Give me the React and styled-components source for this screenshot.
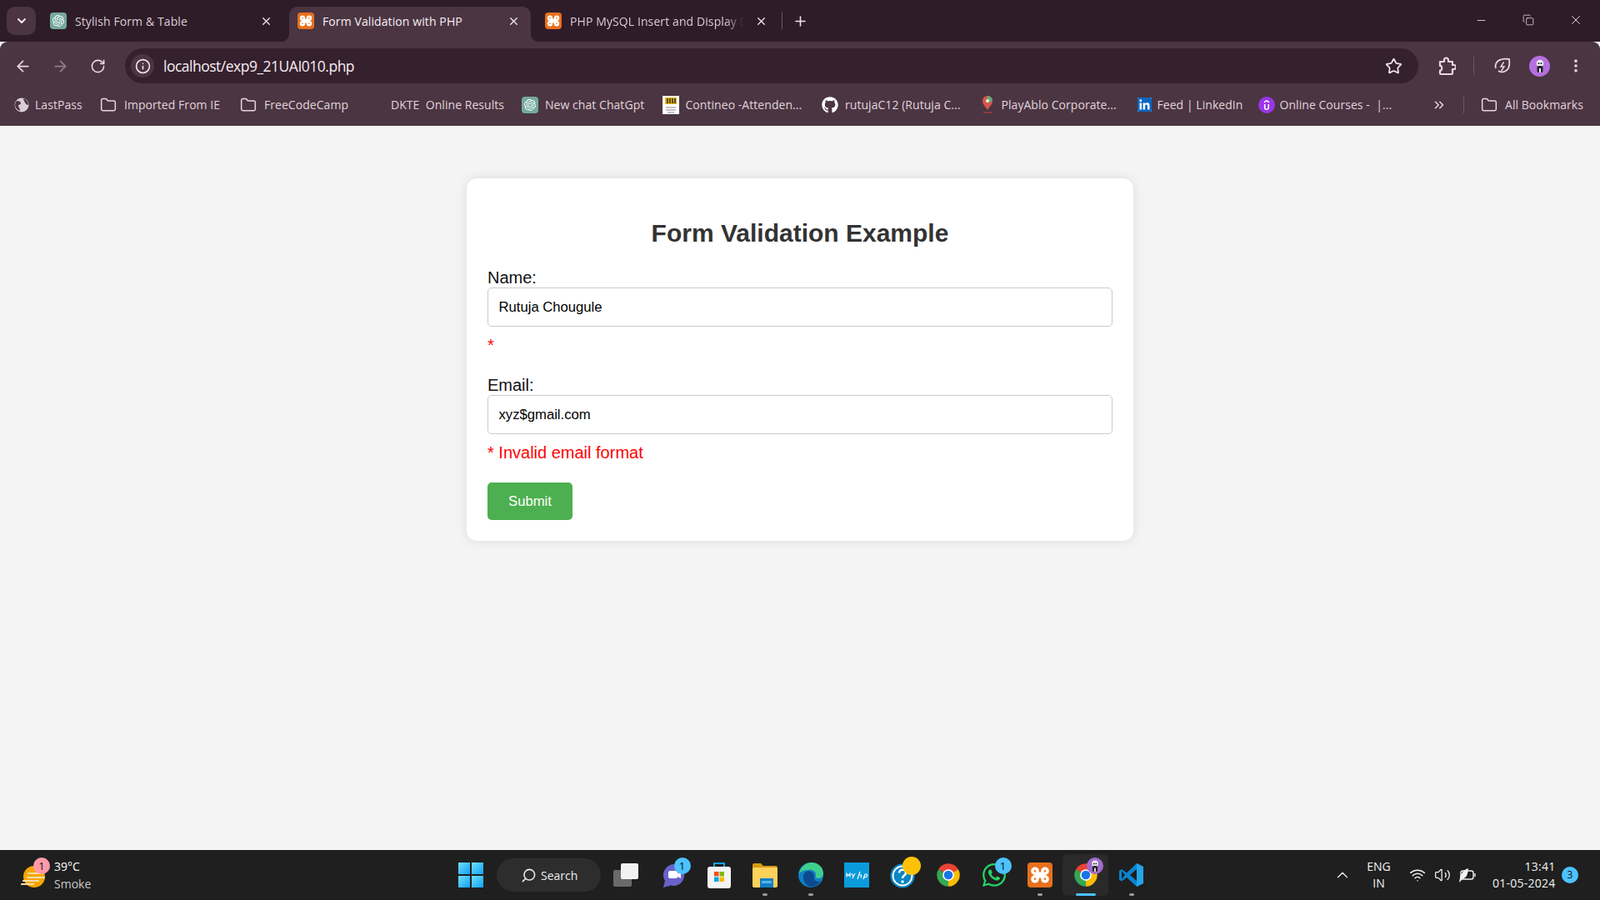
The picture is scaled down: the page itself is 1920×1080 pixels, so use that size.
import React from 'react';
import styled, { createGlobalStyle } from 'styled-components';
import { FaGithub, FaWhatsapp } from 'react-icons/fa';
import { SiOpenai, SiUdemy, SiLinkedin } from 'react-icons/si';
import { ArrowLeft, ArrowRight, RotateCw, Star, ChevronDown, X, Plus, Minus, Copy, Folder, Info, EllipsisVertical, ChevronsRight, ChevronUp, Search, Wifi, Volume2 } from 'lucide-react';

const Global = createGlobalStyle`
  html, body { margin: 0; padding: 0; height: 100%; overflow: hidden; background: #f4f4f4; }
  * { box-sizing: border-box; }
`;
const ui = `"Open Sans", "Noto Sans", sans-serif`;
const Screen = styled.div`width: 1920px; height: 1080px; display: flex; flex-direction: column; overflow: hidden; font-family: ${ui};`;
const TabStrip = styled.div`height: 50px; background: #2f1c29; display: flex; align-items: flex-end; padding-left: 8px; flex: none;`;
const TabToggle = styled.div`width: 35px; height: 34px; margin-bottom: 8px; margin-right: 7px; border-radius: 10px; background: #4b3542; color: #f0e6ec; display: flex; align-items: center; justify-content: center;`;
const Tab = styled.div`
  position: relative; width: 290px; height: 42px; margin-right: 7px; padding: 0 10px 8px 10px; display: flex; align-items: center; gap: 10px;
  border-radius: 10px 10px 0 0; font-size: 14px; letter-spacing: 0.1px; white-space: nowrap;
  color: ${p => p.$active ? '#f6eef3' : '#d9cdd5'}; background: ${p => p.$active ? '#4b3542' : 'transparent'};
  ${p => p.$active && `
    &::before, &::after { content: ''; position: absolute; bottom: 0; width: 10px; height: 10px; }
    &::before { left: -10px; background: radial-gradient(circle at 0 0, transparent 10px, #4b3542 10.5px); }
    &::after { right: -10px; background: radial-gradient(circle at 100% 0, transparent 10px, #4b3542 10.5px); }
  `}
`;
const TabTitle = styled.span`flex: 1; overflow: hidden; ${p => p.$fade && `-webkit-mask-image: linear-gradient(90deg, #000 90%, transparent);`}`;
const TabClose = styled.span`display: flex; width: 22px; justify-content: center; color: #efe6ec;`;
const StripDivider = styled.span`width: 1px; height: 20px; background: #6d5764; margin: 0 0 15px -3px;`;
const NewTab = styled.span`color: #efe6ec; display: flex; margin: 0 0 15px 12px;`;
const WindowControls = styled.div`margin-left: auto; display: flex; align-self: flex-start; height: 50px; align-items: center; padding-bottom: 2px; padding-right: 1px;`;
const WindowButton = styled.span`width: 56.5px; display: flex; justify-content: center; color: #efe6ec;`;
const Favicon = styled.span`
  width: ${p => p.$s || 20}px; height: ${p => p.$s || 20}px; flex: none; border-radius: 4px; display: flex; align-items: center; justify-content: center; color: #fff;
  background: ${p => p.$bg || 'transparent'};
`;
const Toolbar = styled.div`height: 55px; background: #4b3542; border-radius: 9px 9px 0 0; padding: 8px 0 5px 5px; display: flex; align-items: center; flex: none;`;
const NavButton = styled.span`width: 45px; display: flex; justify-content: center; color: ${p => p.$off ? '#8f7d89' : '#e6d8e0'};`;
const Omnibox = styled.div`flex: 1; height: 42px; margin-left: 10px; border-radius: 21px; background: #35202d; display: flex; align-items: center; padding: 0 19px 0 7px;`;
const InfoChip = styled.span`width: 28px; height: 28px; border-radius: 50%; background: #4b3542; color: #f3eaef; display: flex; align-items: center; justify-content: center;`;
const Url = styled.span`flex: 1; margin-left: 11px; color: #f5edf2; font-size: 17.5px; letter-spacing: -0.5px; padding-bottom: 1px;`;
const Actions = styled.div`width: 218px; flex: none; display: flex; align-items: center; padding-left: 23px; color: #e6d8e0;`;
const ActionSep = styled.span`width: 1px; height: 22px; background: #6d5764; margin: 0 23px 0 21px;`;
const Avatar = styled.span`width: 25px; height: 25px; border-radius: 50%; background: #b46fe0; margin-left: 21px; margin-right: 21px; display: flex; align-items: center; justify-content: center; overflow: hidden;`;
const Bookmarks = styled.div`height: 46px; background: #4b3542; display: flex; align-items: center; padding: 0 0 5px 16px; flex: none; font-size: 14px; letter-spacing: 0.05px; color: #e0d4dc;`;
const Bookmark = styled.div`width: ${p => p.$w}px; display: flex; align-items: center; gap: ${p => p.$gap ?? 9}px; white-space: pre; flex: none;`;
const BmIcon = styled.span`width: 20px; height: 20px; flex: none; display: flex; align-items: center; justify-content: center; color: #e6d8e0;`;
const MoreMarks = styled.span`margin-left: 42px; color: #e6d8e0; display: flex;`;
const BarSep = styled.span`width: 1px; height: 20px; background: #6d5764; margin: 0 20px 0 20px;`;
const Page = styled.main`flex: 1; background: #f4f4f4; display: flex; justify-content: center; align-items: flex-start; padding-top: 63px; font-family: "Liberation Sans", Arial, sans-serif;`;
const Card = styled.form`width: 800px; background: #fff; border-radius: 12.5px; padding: 25px; box-shadow: 0 0 12.5px rgba(0,0,0,0.1);`;
const Heading = styled.h2`margin: 0 0 20px; padding-top: 23px; height: 63px; font-size: 30px; line-height: 36px; font-weight: 700; color: #333; text-align: center;`;
const Label = styled.label`display: block; font-size: 20px; line-height: 23px; color: #111;`;
const Input = styled.input`display: block; width: 100%; height: 47px; padding: 0 12.5px; font: 16.67px "Liberation Sans", Arial, sans-serif; color: #000; background: #fff; border: 1.25px solid #ccc; border-radius: 5px; outline: none;`;
const ErrorText = styled.div`font-size: 20px; line-height: 23px; height: 59px; padding-top: 11px; color: #f00;`;
const Submit = styled.button`width: 102px; height: 45px; border: 0; border-radius: 5px; background: #4caf50; color: #fff; font: 16.67px "Liberation Sans", Arial, sans-serif; margin-top: -1px; display: block;`;
const Taskbar = styled.footer`height: 60px; background: #1f1f1f; display: flex; align-items: center; flex: none; color: #fff;`;
const Weather = styled.div`width: 541px; padding-left: 25px; display: flex; align-items: center; gap: 10px; flex: none;`;
const WeatherIcon = styled.span`position: relative; width: 30px; height: 34px; display: flex;`;
const WeatherText = styled.div`font-size: 14px; line-height: 21px; span { display: block; } span + span { color: #c9c9c9; }`;
const StartButton = styled.span`width: 30px; height: 30px; margin-left: 9px; display: grid; grid-template-columns: 1fr 1fr; gap: 1.5px;`;
const Pane = styled.i`background: linear-gradient(135deg, #6fe0ff, #12a0f5); display: block;`;
const SearchPill = styled.div`width: 125px; height: 40px; margin-left: 16px; border-radius: 20px; background: #2d2d2d; display: flex; align-items: center; padding-left: 29px; gap: 5px; font-size: 14px; color: #eee;`;
const Dock = styled.div`display: flex; margin-left: 1.5px; align-items: center;`;
const DockItem = styled.div`position: relative; width: ${p => p.$w || 55}px; height: 50px; flex: none; border-radius: 6px; display: flex; align-items: center; justify-content: center; background: ${p => p.$active ? '#2a2a2a' : 'transparent'};`;
const Running = styled.i`position: absolute; left: 50%; bottom: 0; transform: translateX(-50%); width: ${p => p.$active ? 24 : 6}px; height: 3px; border-radius: 2px; background: ${p => p.$active ? '#4cc2ff' : '#9a9a9a'};`;
const Badge = styled.b`position: absolute; top: ${p => p.$t ?? 4}px; left: ${p => p.$l ?? 28.5}px; width: ${p => p.$s || 20}px; height: ${p => p.$s || 20}px; border-radius: 50%; background: ${p => p.$bg || '#4cc2ff'}; color: #111; font: 400 13px/${p => p.$s || 20}px ${ui}; text-align: center; display: flex; align-items: center; justify-content: center;`;
const Tray = styled.div`margin-left: auto; display: flex; align-items: center; color: #f2f2f2; padding-right: 26px;`;
const Lang = styled.div`font-size: 14px; line-height: 20px; text-align: center; width: 40px; margin: 0 11.5px 0 13px;`;
const TrayIcon = styled.span`width: 30px; display: flex; justify-content: center;`;
const Clock = styled.div`font-size: 14px; line-height: 20px; text-align: right; width: 90.5px; letter-spacing: 0.25px;`;
const Notify = styled.span`width: 20px; height: 20px; margin-left: 7.5px; border-radius: 50%; background: #4cc2ff; color: #111; font-size: 12px; line-height: 20px; text-align: center;`;

const Chrome = ({ s = 30 }) => (
  <svg width={s} height={s} viewBox="0 0 48 48">
    <path d="M24 24L4.95 13A22 22 0 0 1 43.05 13Z" fill="#ea4335" />
    <path d="M24 24L43.05 13A22 22 0 0 1 24 46Z" fill="#fbbc04" />
    <path d="M24 24L24 46A22 22 0 0 1 4.95 13Z" fill="#34a853" />
    <circle cx="24" cy="24" r="11" fill="#fff" /><circle cx="24" cy="24" r="8.5" fill="#1a73e8" />
  </svg>
);
const Xampp = ({ s = 16 }) => (
  <svg width={s} height={s} viewBox="0 0 20 20" fill="none" stroke="#fff" strokeWidth="3" strokeLinejoin="round">
    <path d="M7.500 10V6a2.500 2.500 0 1 0-2.500 2.500h10A2.500 2.500 0 1 0 12.500 6v8a2.500 2.500 0 1 0 2.500-2.500H5A2.500 2.500 0 1 0 7.500 14z" />
  </svg>
);
const AvatarArt = ({ s = 16 }) => (
  <svg width={s} height={s} viewBox="0 0 16 16"><circle cx="8" cy="5" r="4.300" fill="#eee" /><rect x="4.500" y="8" width="7" height="8" rx="2" fill="#222" /><rect x="7" y="11" width="2" height="5" fill="#eee" /><circle cx="6.500" cy="5" r="1" fill="#222" /><circle cx="9.500" cy="5" r="1" fill="#222" /></svg>
);
const Globe = () => (
  <svg width="18" height="18" viewBox="0 0 18 18"><circle cx="9" cy="9" r="8.500" fill="#d9cdd5" /><path d="M3 4c3 0 5 1 5 3s-3 1-3 3 2 2 2 6c-3-1-6-4-6-7 0-2 1-4 2-5zM11 1c3 1 6 4 6 8-2 0-3-1-4-3s-2-3-2-5z" fill="#4b3542" /></svg>
);
const Contineo = () => (
  <svg width="20" height="22" viewBox="0 0 20 22"><rect width="20" height="22" fill="#fff" /><rect x="3" y="2" width="14" height="8" fill="#e7b711" /><path d="M6 3v6M9 3v6M12 3v6M15 3v6" stroke="#222" strokeWidth="1.400" /><path d="M4 14h12M4 17h12M6 20h8" stroke="#888" /></svg>
);
const Playablo = () => (
  <svg width="16" height="24" viewBox="0 0 16 24"><path d="M8 1a6 6 0 0 1 6 6c0 4-4 8-6 11-2-3-6-7-6-11a6 6 0 0 1 6-6z" fill="#d8564a" /><path d="M8 1a6 6 0 0 1 6 6L8 10z" fill="#5fae7b" /><circle cx="8" cy="7" r="2" fill="#eee" /><rect x="3" y="20" width="10" height="2" fill="#8b3a44" /></svg>
);
const Extension = () => (
  <svg width="22" height="24" viewBox="0 0 22 24" fill="none" stroke="#e6d8e0" strokeWidth="2.200" strokeLinejoin="round"><path d="M3 7h5V5a2.500 2.500 0 0 1 5 0v2h5v4h1.500a2.500 2.500 0 0 1 0 5H18v5a1 1 0 0 1-1 1H4a1 1 0 0 1-1-1v-3.500c3 .5 3-6 0-5.500z" /></svg>
);
const Saver = () => (
  <svg width="22" height="22" viewBox="0 0 22 22" fill="none" stroke="#e6d8e0" strokeWidth="1.800"><path d="M3 14A8 8 0 0 1 9 3.500C12 2.500 16 2.500 19 3c.5 4 .5 8-1 11a8.500 8.500 0 0 1-12 3" /><path d="M12.500 6.500L9 12h4l-3.500 5" strokeWidth="1.500" /></svg>
);
const SmokeSun = () => (
  <svg width="30" height="34" viewBox="0 0 30 34"><circle cx="16" cy="19" r="13" fill="#f7a600" /><path d="M9 15h17M8 20h20M3 24h18M1 28h14" stroke="#f1dfa8" strokeWidth="2.200" strokeLinecap="round" /></svg>
);
const TaskView = () => (
  <svg width="30" height="30" viewBox="0 0 30 30"><rect x="0" y="9" width="22" height="20" rx="2" fill="#6a6a6a" /><rect x="9" y="1" width="21" height="19" rx="2" fill="#f2f2f2" /></svg>
);
const Teams = () => (
  <svg width="30" height="32" viewBox="0 0 30 32"><path d="M15 3a13 13 0 1 1-3 25.600L3 31l2-8A13 13 0 0 1 15 3z" fill="#6a62c8" /><rect x="9" y="11" width="11" height="9" rx="2" fill="#fff" /><path d="M20 14l4-2v8l-4-2z" fill="#fff" /></svg>
);
const Store = () => (
  <svg width="30" height="34" viewBox="0 0 30 34"><path d="M9 8V3h12v5" fill="none" stroke="#19a0dc" strokeWidth="2" /><rect x="1" y="7" width="28" height="26" rx="3" fill="#f4f4f4" /><rect x="9" y="13" width="5.500" height="5.500" fill="#f25022" /><rect x="15.500" y="13" width="5.500" height="5.500" fill="#7fba00" /><rect x="9" y="19.500" width="5.500" height="5.500" fill="#00a4ef" /><rect x="15.500" y="19.500" width="5.500" height="5.500" fill="#ffb900" /></svg>
);
const Files = () => (
  <svg width="30" height="30" viewBox="0 0 30 30"><path d="M0 3a2 2 0 0 1 2-2h8l3 3h15a2 2 0 0 1 2 2v4H0z" fill="#d79a12" /><rect y="6" width="30" height="24" rx="2" fill="#fcd25a" /><rect x="9" y="19" width="16" height="11" fill="#0f7ec7" /><rect x="11" y="22" width="12" height="3" fill="#55b5ea" /></svg>
);
const Edge = () => (
  <svg width="30" height="32" viewBox="0 0 30 32"><circle cx="15" cy="16" r="15" fill="#0f7fc4" /><path d="M1 14C3 5 10 1 16 1c8 0 14 6 14 13 0 3-2 6-6 6-2 0-4-1-3-3 1-5-4-8-9-7-5 0-9 2-11 4z" fill="#3ecf8e" /><path d="M6 18c0-5 5-8 9-6 4 1 4 5 4 8 0 3 4 5 8 3-3 5-9 8-13 7C9 29 6 24 6 18z" fill="#0c4a8f" /></svg>
);
const MyHp = () => (
  <svg width="30" height="30" viewBox="0 0 30 36" preserveAspectRatio="none"><rect width="30" height="36" fill="#0a9bdc" /><path d="M3 21v-5l2 3 2-3v5M9 16l2 4 2-4M11 20l-1 3M16 24l3-11M18 18c2-1 3 0 2.500 2l-.5 2M23 24l2-7c2-1 3 0 2.400 2-.4 2-2 2.600-3.400 2" fill="none" stroke="#fff" strokeWidth="1.200" /></svg>
);
const Help = () => (
  <svg width="30" height="32" viewBox="0 0 30 32"><circle cx="15" cy="17" r="13.500" fill="#fff" stroke="#0b86c4" strokeWidth="2.200" /><circle cx="15" cy="17" r="10.500" fill="#0b86c4" /><path d="M11 13.500c0-5 8-5 8 0 0 3-4 3-4 6.500" fill="none" stroke="#fff" strokeWidth="2.600" /><circle cx="15" cy="24" r="1.700" fill="#fff" /></svg>
);
const Code = () => (
  <svg width="30" height="30" viewBox="0 0 30 30"><path d="M21 1l8 4v20l-8 4-12-11-6 4.500-3-2V10l3-2 6 4.500z" fill="#0a84d0" /><path d="M21 8v14l-8-7z" fill="#1f1f1f" /><path d="M21 1l8 4v20l-8 4z" fill="#26a5ea" /><path d="M3 10l4 5-4 5z" fill="#1f1f1f" /></svg>
);
const Battery = () => (
  <svg width="22" height="18" viewBox="0 0 22 18" fill="none" stroke="#f2f2f2" strokeWidth="1.400"><rect x="3" y="4" width="15" height="10" rx="2.500" /><path d="M20 7v4" /><path d="M2 16C3 8 6 4 11 2c0 6-2 10-6 11z" fill="#f2f2f2" /></svg>
);

const bookmarks = [
  { w: 104, gap: 6, icon: <Globe />, text: 'LastPass' },
  { w: 168, icon: <Folder size={20} strokeWidth={1.8} />, text: 'Imported From IE' },
  { w: 181, icon: <Folder size={20} strokeWidth={1.8} />, text: 'FreeCodeCamp' },
  { w: 157, text: 'DKTE  Online Results' },
  { w: 169, gap: 8, icon: <Favicon $bg="#74aa9c"><SiOpenai size={14} /></Favicon>, text: 'New chat ChatGpt' },
  { w: 191, gap: 7.5, icon: <Contineo />, text: 'Contineo -Attenden...' },
  { w: 189, gap: 8, icon: <FaGithub size={20} color="#fff" />, text: 'rutujaC12 (Rutuja C...' },
  { w: 188, gap: 6.5, icon: <Playablo />, text: 'PlayAblo Corporate...' },
  { w: 147, gap: 5.5, icon: <SiLinkedin size={17} color="#0a66c2" style={{ background: '#fff', borderRadius: 2 }} />, text: 'Feed | LinkedIn' },
  { w: 166, gap: 5.5, icon: <Favicon $bg="#9a36e8" style={{ borderRadius: '50%' }}><SiUdemy size={12} /></Favicon>, text: 'Online Courses -  |...' },
];
const dock = [
  { el: <Teams />, badge: '1' },
  { el: <Store /> },
  { el: <Files />, run: true },
  { el: <Edge />, run: true },
  { el: <MyHp /> },
  { el: <Help />, dot: true },
  { el: <Chrome /> },
  { el: <FaWhatsapp size={32} color="#25d366" />, badge: '1' },
  { el: <Favicon $s={30} $bg="#e8701d"><Xampp s={24} /></Favicon>, run: true },
  { el: <Chrome />, active: true, run: true },
  { el: <Code />, run: true },
];

export default function App() {
  return (
    <Screen>
      <Global />
      <TabStrip>
        <TabToggle><ChevronDown size={16} strokeWidth={3} /></TabToggle>
        <Tab>
          <Favicon $bg="#74aa9c"><SiOpenai size={14} /></Favicon>
          <TabTitle>Stylish Form &amp; Table</TabTitle>
          <TabClose><X size={15} strokeWidth={2.2} /></TabClose>
        </Tab>
        <Tab $active>
          <Favicon $bg="#e8701d"><Xampp /></Favicon>
          <TabTitle>Form Validation with PHP</TabTitle>
          <TabClose><X size={15} strokeWidth={2.2} /></TabClose>
        </Tab>
        <Tab>
          <Favicon $bg="#e8701d"><Xampp /></Favicon>
          <TabTitle $fade>PHP MySQL Insert and Display Data</TabTitle>
          <TabClose><X size={15} strokeWidth={2.2} /></TabClose>
        </Tab>
        <StripDivider />
        <NewTab><Plus size={19} strokeWidth={2} /></NewTab>
        <WindowControls>
          <WindowButton><Minus size={15} strokeWidth={1.3} /></WindowButton>
          <WindowButton><Copy size={14} strokeWidth={1.3} /></WindowButton>
          <WindowButton><X size={18} strokeWidth={1.2} /></WindowButton>
        </WindowControls>
      </TabStrip>
      <Toolbar>
        <NavButton><ArrowLeft size={21} strokeWidth={2} /></NavButton>
        <NavButton $off><ArrowRight size={21} strokeWidth={2} /></NavButton>
        <NavButton><RotateCw size={19} strokeWidth={2} /></NavButton>
        <Omnibox>
          <InfoChip><Info size={19} strokeWidth={2} /></InfoChip>
          <Url>localhost/exp9_21UAI010.php</Url>
          <Star size={21} strokeWidth={2} color="#f0e6ec" />
        </Omnibox>
        <Actions>
          <Extension />
          <ActionSep />
          <Saver />
          <Avatar><AvatarArt /></Avatar>
          <EllipsisVertical size={20} strokeWidth={2.4} />
        </Actions>
      </Toolbar>
      <Bookmarks>
        {bookmarks.map(b => (
          <Bookmark key={b.text} $w={b.w} $gap={b.gap}>
            {b.icon && <BmIcon>{b.icon}</BmIcon>}
            <span>{b.text}</span>
          </Bookmark>
        ))}
        <MoreMarks><ChevronsRight size={18} /></MoreMarks>
        <BarSep />
        <Bookmark $w={130}>
          <BmIcon><Folder size={20} strokeWidth={1.8} /></BmIcon>
          <span>All Bookmarks</span>
        </Bookmark>
      </Bookmarks>
      <Page>
        <Card onSubmit={e => e.preventDefault()}>
          <Heading>Form Validation Example</Heading>
          <Label htmlFor="name">Name:</Label>
          <Input id="name" defaultValue="Rutuja Chougule" />
          <ErrorText>*</ErrorText>
          <Label htmlFor="email">Email:</Label>
          <Input id="email" defaultValue="xyz$gmail.com" />
          <ErrorText>* Invalid email format</ErrorText>
          <Submit type="submit">Submit</Submit>
        </Card>
      </Page>
      <Taskbar>
        <Weather>
          <WeatherIcon><SmokeSun /><Badge $t={-4} $l={15} $bg="#ff9aa8">1</Badge></WeatherIcon>
          <WeatherText><span>39°C</span><span>Smoke</span></WeatherText>
        </Weather>
        <StartButton><Pane /><Pane /><Pane /><Pane /></StartButton>
        <SearchPill><Search size={19} style={{ transform: 'scaleX(-1)' }} />Search</SearchPill>
        <Dock>
          <DockItem $w={57.5}><TaskView /></DockItem>
          {dock.map((d, i) => (
            <DockItem key={i} $active={d.active}>
              {d.el}
              {d.badge && <Badge>{d.badge}</Badge>}
              {d.dot && <Badge $l={27.5} $t={3} $s={22} $bg="#ffc107" />}
              {d.active && <Badge $bg="#a26ad0"><AvatarArt s={14} /></Badge>}
              {d.run && <Running $active={d.active} />}
            </DockItem>
          ))}
        </Dock>
        <Tray>
          <ChevronUp size={22} strokeWidth={1.3} />
          <Lang>ENG<br />IN</Lang>
          <TrayIcon><Wifi size={20} strokeWidth={1.8} /></TrayIcon>
          <TrayIcon><Volume2 size={20} strokeWidth={1.5} /></TrayIcon>
          <TrayIcon><Battery /></TrayIcon>
          <Clock>13:41<br />01-05-2024</Clock>
          <Notify>3</Notify>
        </Tray>
      </Taskbar>
    </Screen>
  );
}
